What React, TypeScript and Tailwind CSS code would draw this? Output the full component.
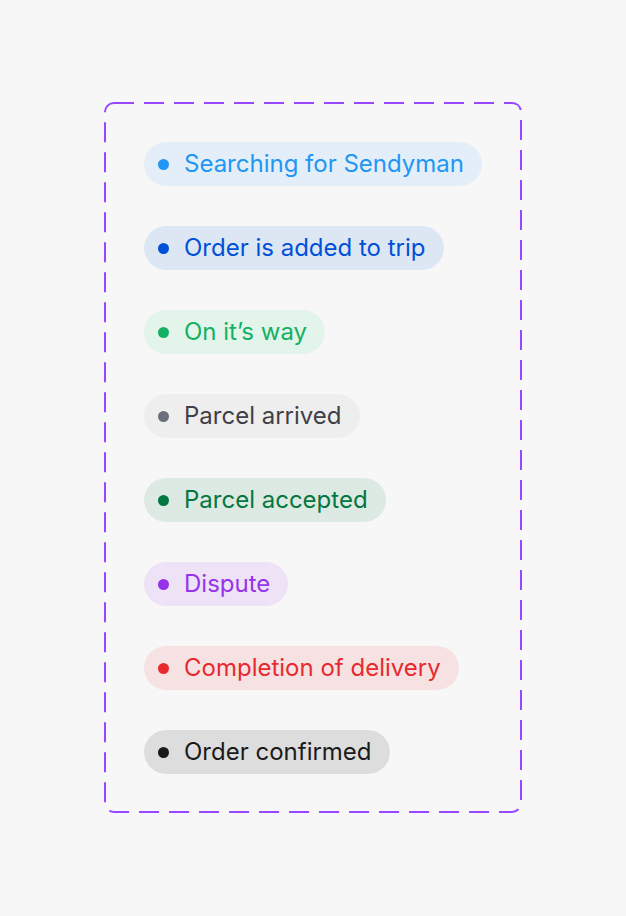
import React from 'react';

type Status = {
  label: string;
  bg: string;
  text: string;
  dot: string;
};

const statuses: Status[] = [
  { label: 'Searching for Sendyman', bg: 'bg-[#e3eef8]', text: 'text-[#2196f3]', dot: 'bg-[#2196f3]' },
  { label: 'Order is added to trip', bg: 'bg-[#dde7f4]', text: 'text-[#0050d8]', dot: 'bg-[#0050d8]' },
  { label: 'On it’s way', bg: 'bg-[#e3f4ea]', text: 'text-[#14b165]', dot: 'bg-[#14b165]' },
  { label: 'Parcel arrived', bg: 'bg-[#eeeeee]', text: 'text-[#3f3f46]', dot: 'bg-[#6b6f7b]' },
  { label: 'Parcel accepted', bg: 'bg-[#dde9e3]', text: 'text-[#03773f]', dot: 'bg-[#03773f]' },
  { label: 'Dispute', bg: 'bg-[#eee2f6]', text: 'text-[#9534ea]', dot: 'bg-[#9534ea]' },
  { label: 'Completion of delivery', bg: 'bg-[#f6e2e2]', text: 'text-[#e8292e]', dot: 'bg-[#e8292e]' },
  { label: 'Order confirmed', bg: 'bg-[#dddddd]', text: 'text-[#1a1a1a]', dot: 'bg-[#1a1a1a]' },
];

const StatusChip: React.FC<{ status: Status }> = ({ status }) => (
  <div className={`inline-flex items-center h-[44px] rounded-full pl-[14px] pr-[18px] gap-[15px] ${status.bg}`}>
    <span className={`w-[11px] h-[11px] rounded-full shrink-0 ${status.dot}`} />
    <span className={`text-[24px] leading-none whitespace-nowrap ${status.text}`}>{status.label}</span>
  </div>
);

export default function App() {
  return (
    <div
      className="min-h-screen w-full bg-[#f7f7f7] pt-[102px] pl-[104px]"
      style={{ fontFamily: 'Inter, "Noto Sans", sans-serif' }}
    >
      <div className="relative w-[418px] h-[711px] p-[40px]">
        {/* dashed component-set frame */}
        <svg className="absolute inset-0 pointer-events-none" width="418" height="711">
          <rect
            x="1"
            y="1"
            width="416"
            height="709"
            rx="9"
            fill="none"
            stroke="#9747ff"
            strokeWidth="2"
            strokeDasharray="20 10"
          />
        </svg>
        <div className="flex flex-col items-start gap-[40px]">
          {statuses.map((s) => (
            <StatusChip key={s.label} status={s} />
          ))}
        </div>
      </div>
    </div>
  );
}
